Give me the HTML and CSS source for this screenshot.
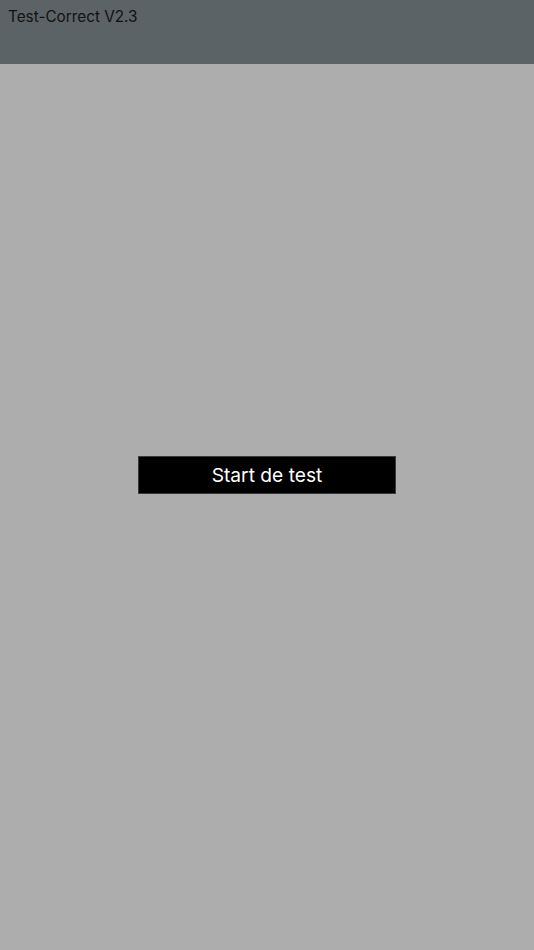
FILE: index.html
```html
<!DOCTYPE html>
<html lang="nl">
<head>
<meta charset="utf-8">
<title>Test-Correct</title>
<link rel="stylesheet" href="styles.css">
</head>
<body>
<header class="topbar">
  <span class="title">Test-Correct V2.3</span>
</header>
<main class="content">
  <button class="start-btn" type="button">Start de test</button>
</main>
</body>
</html>
```
FILE: styles.css
```css
html, body {
  margin: 0;
  padding: 0;
  height: 100%;
}
body {
  background: #adadad;
  font-family: Inter, "Noto Sans", "Liberation Sans", sans-serif;
  display: flex;
  flex-direction: column;
}
.topbar {
  height: 64px;
  background: #5c6366;
  box-sizing: border-box;
  padding: 6px 8px 0;
  flex-shrink: 0;
}
.title {
  font-size: 15.3px;
  line-height: 20px;
  color: #111;
}
.content {
  flex: 1;
  display: flex;
  justify-content: center;
  align-items: flex-start;
  padding-top: 392px;
}
.start-btn {
  width: 258px;
  height: 38px;
  background: #000;
  color: #fff;
  border: 1px solid #3a3a3a;
  font-family: Inter, "Noto Sans", "Liberation Sans", sans-serif;
  font-size: 19.2px;
  padding: 0;
  cursor: pointer;
}
```
